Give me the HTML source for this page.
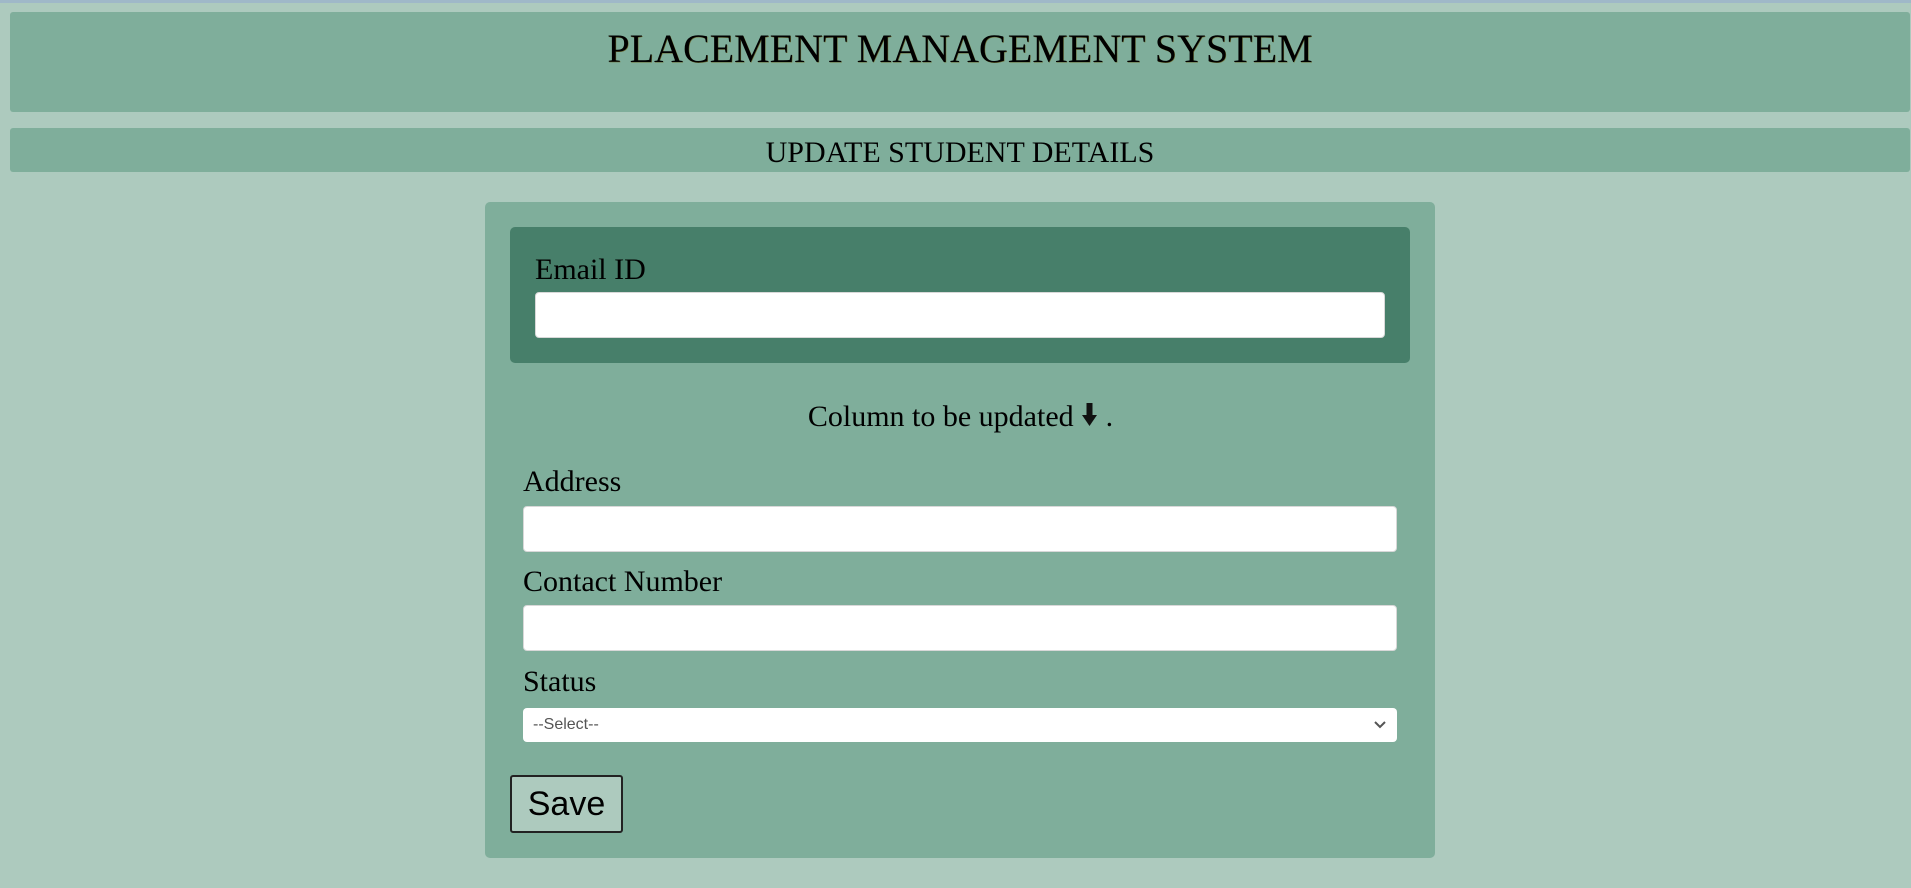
<!DOCTYPE html>
<html><head><meta charset="utf-8"><style>
*{margin:0;padding:0;box-sizing:border-box}
html,body{width:1911px;height:888px;overflow:hidden;background:#adcabe;position:relative;font-family:"Liberation Serif",serif;color:#000}
.top{position:absolute;left:0;top:0;width:1911px;height:3px;background:#9fb8c8}
.hdr{position:absolute;left:10px;top:12px;width:1900px;height:100px;background:#7fae9b;border-radius:3px}
.hdr h1{font-weight:normal;font-size:40px;text-align:center;position:absolute;top:16px;left:0;right:0;line-height:42px;text-shadow:0.5px 0.5px 0 #6a6a30}
.sub{position:absolute;left:10px;top:128px;width:1900px;height:44px;background:#7fae9b;border-radius:3px;text-align:center;font-size:30px;line-height:50px}
.panel{position:absolute;left:485px;top:202px;width:950px;height:656px;background:#7fae9b;border-radius:5px}
.inner{position:absolute;left:510px;top:227px;width:900px;height:136px;background:#477f6a;border-radius:5px}
.lbl{position:absolute;font-size:30px;line-height:34px}
.inp{position:absolute;background:#fff;border-radius:4px;border:1px solid #d8d8d8}
.sel{position:absolute;left:523px;top:708px;width:874px;height:34px;background:#fff;border-radius:4px;font-family:"Liberation Sans",sans-serif;font-size:16px;color:#555;padding-left:10px;line-height:34px}
.btn{position:absolute;left:510px;top:775px;width:113px;height:58px;background:#adcabe;border:2px solid #222;border-radius:3px;font-family:"Liberation Sans",sans-serif;font-size:34px;text-align:center;line-height:54px}
</style></head><body>
<div class="top"></div>
<div class="hdr"><h1>PLACEMENT MANAGEMENT SYSTEM</h1></div>
<div class="sub">UPDATE STUDENT DETAILS</div>
<div class="panel"></div>
<div class="inner"></div>
<div class="lbl" style="left:535px;top:253px">Email ID</div>
<div class="inp" style="left:535px;top:292px;width:850px;height:46px"></div>
<div class="lbl" style="left:0;width:1911px;text-align:center;top:400px;padding-left:10px">Column to be updated <svg width="17" height="24" viewBox="0 0 17 24" style="vertical-align:-1px"><rect x="5.5" y="0" width="6" height="14" fill="#111"/><path d="M1 12 L16 12 L8.5 23 Z" fill="#111"/></svg> .</div>
<div class="lbl" style="left:523px;top:465px">Address</div>
<div class="inp" style="left:523px;top:506px;width:874px;height:46px"></div>
<div class="lbl" style="left:523px;top:565px">Contact Number</div>
<div class="inp" style="left:523px;top:605px;width:874px;height:46px"></div>
<div class="lbl" style="left:523px;top:665px">Status</div>
<div class="sel">--Select--<svg width="14" height="10" viewBox="0 0 14 10" style="position:absolute;right:10px;top:12px"><path d="M2 2 L7 7 L12 2" stroke="#555" stroke-width="2" fill="none"/></svg></div>
<div class="btn">Save</div>
</body></html>
